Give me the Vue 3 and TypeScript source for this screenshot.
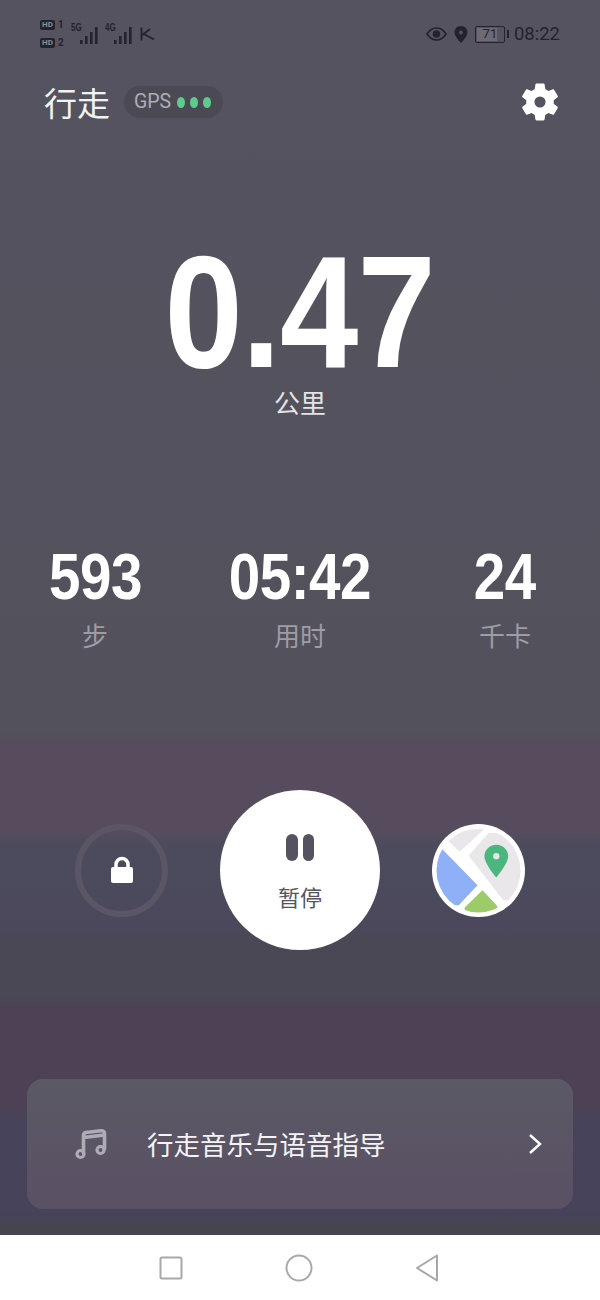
<template>
  <div class="screen">
    <div class="status-bar">
      <div class="status-left">
        <div class="hd-col">
          <div class="hd-row"><span class="hd">HD</span><span class="sim">1</span></div>
          <div class="hd-row"><span class="hd">HD</span><span class="sim">2</span></div>
        </div>
        <div class="signal">
          <span class="net">5G</span>
          <svg width="18" height="18" viewBox="0 0 18 18"><rect v-for="b in bars" :key="b.x" :x="b.x" :y="b.y" width="2.6" :height="18 - b.y" fill="#24232c" /></svg>
        </div>
        <div class="signal">
          <span class="net">4G</span>
          <svg width="18" height="18" viewBox="0 0 18 18"><rect v-for="b in bars" :key="b.x" :x="b.x" :y="b.y" width="2.6" :height="18 - b.y" fill="#24232c" /></svg>
        </div>
        <svg class="k-icon" width="15" height="14" viewBox="0 0 15 14"><path d="M1.500 0.500V13.500M1.500 8.500L10 2M4 7L14 12.500" fill="none" stroke="#24232c" stroke-width="1.800" /></svg>
      </div>
      <div class="status-right">
        <svg width="21" height="14" viewBox="0 0 21 14"><path d="M1 7C3.500 3 6.500 1 10.500 1S17.500 3 20 7C17.500 11 14.500 13 10.500 13S3.500 11 1 7Z" fill="none" stroke="#24232c" stroke-width="1.600" /><circle cx="10.500" cy="7" r="3.800" fill="#24232c" /></svg>
        <svg width="14" height="17" viewBox="0 0 14 17"><path fill-rule="evenodd" d="M7 0C3.100 0 .5 2.900 .5 6.300C.5 10.500 7 17 7 17S13.500 10.500 13.500 6.300C13.500 2.900 10.900 0 7 0ZM7 4.600A1.900 1.900 0 1 1 7 8.400A1.900 1.900 0 0 1 7 4.600Z" fill="#24232c" /></svg>
        <div class="battery">
          <div class="battery-body"><span class="battery-fill"></span><span class="battery-text">71</span></div>
          <span class="battery-tip"></span>
        </div>
        <span class="clock">08:22</span>
      </div>
    </div>

    <div class="title-row">
      <div class="title-left">
        <span class="title">行走</span>
        <div class="gps">
          <span class="gps-text">GPS</span>
          <i></i><i></i><i></i>
        </div>
      </div>
      <svg class="gear" width="46" height="46" viewBox="0 0 24 24"><path fill="#fff" fill-rule="evenodd" d="M19.140 12.940c.04-.3.060-.61.060-.94 0-.32-.02-.64-.07-.94l2.030-1.580a.49.49 0 0 0 .12-.61l-1.920-3.320a.488.488 0 0 0-.59-.22l-2.390.96c-.5-.38-1.030-.7-1.620-.94l-.36-2.540a.484.484 0 0 0-.48-.41h-3.840c-.24 0-.43.17-.47.41l-.36 2.540c-.59.24-1.130.57-1.620.94l-2.390-.96c-.22-.08-.47 0-.59.22L2.740 8.870c-.12.21-.08.47.12.61l2.030 1.580c-.05.3-.09.63-.09.94s.02.64.07.94l-2.030 1.580a.49.49 0 0 0-.12.61l1.920 3.320c.12.22.37.29.59.22l2.390-.96c.5.38 1.030.7 1.620.94l.36 2.540c.05.24.24.41.48.41h3.840c.24 0 .44-.17.47-.41l.36-2.540c.59-.24 1.130-.56 1.620-.94l2.390.96c.22.08.47 0 .59-.22l1.920-3.320c.12-.22.07-.47-.12-.61l-2.010-1.580zM12 9.100a2.900 2.900 0 1 0 0 5.800a2.900 2.900 0 1 0 0-5.800z" /></svg>
    </div>

    <div class="distance">
      <div class="distance-value">0.47</div>
      <div class="distance-unit">公里</div>
    </div>

    <div class="stats">
      <div v-for="s in stats" :key="s.label" class="stat">
        <div class="stat-value">{{ s.value }}</div>
        <div class="stat-label">{{ s.label }}</div>
      </div>
    </div>

    <div class="controls">
      <div class="lock-btn">
        <svg width="24" height="28" viewBox="0 0 24 28"><path d="M6 13V8.500A6 6 0 0 1 18 8.500V13" fill="none" stroke="#fff" stroke-width="3.500" /><rect x="1" y="11" width="22" height="16" rx="2" fill="#fff" /></svg>
      </div>
      <div class="pause-btn">
        <div class="pause-icon"><span></span><span></span></div>
        <div class="pause-label">暂停</div>
      </div>
      <svg class="map-btn" width="93" height="93" viewBox="0 0 94 94">
        <defs><clipPath id="mapClip"><circle cx="47" cy="47" r="42.500" /></clipPath></defs>
        <circle cx="47" cy="47" r="47" fill="#fff" />
        <g clip-path="url(#mapClip)">
          <path d="M10 25L46 62L27 82L0 82V25Z" fill="#8fb0f6" />
          <path d="M15 16L24 6L53 5L28 28Z" fill="#e9e7ea" />
          <path d="M37 32L57 9H94V77H72Z" fill="#e9e7ea" />
          <path d="M33 84.500L51 67L66 83V94H33Z" fill="#9ccb68" />
        </g>
        <path fill-rule="evenodd" d="M65 21C58 21 53 26.500 53 32.500C53 40 65 54 65 54S77 40 77 32.500C77 26.500 72 21 65 21ZM65 29.300A3.200 3.200 0 1 1 65 35.700A3.200 3.200 0 0 1 65 29.300Z" fill="#4cb67f" />
      </svg>
    </div>

    <div class="guide-card">
      <svg class="music" width="32" height="32" viewBox="0 0 32 32"><path d="M8.500 25V7.500C8.500 5.500 9.500 4.800 11 4.500L26 2.800C28 2.600 29.500 3.500 29.500 5V21M8.500 9.500L29.500 7" fill="none" stroke="#aeabb4" stroke-width="3.600" stroke-linecap="round" /><circle cx="5.500" cy="26" r="3.500" fill="none" stroke="#aeabb4" stroke-width="3.200" /><circle cx="25.500" cy="22" r="3.500" fill="none" stroke="#aeabb4" stroke-width="3.200" /></svg>
      <span class="guide-text">行走音乐与语音指导</span>
      <svg class="chevron" width="14" height="22" viewBox="0 0 14 22"><path d="M2 2L12 11L2 20" fill="none" stroke="#fff" stroke-width="2.400" /></svg>
    </div>

    <div class="spacer"></div>

    <div class="nav-bar">
      <svg width="24" height="24" viewBox="0 0 24 24"><rect x="1.500" y="1.500" width="21" height="21" rx="1.500" fill="none" stroke="#a8a8a8" stroke-width="2" /></svg>
      <svg width="28" height="28" viewBox="0 0 28 28"><circle cx="14" cy="14" r="12.500" fill="none" stroke="#a8a8a8" stroke-width="2" /></svg>
      <svg width="24" height="28" viewBox="0 0 24 28"><path d="M22 1.500V26.500L2 14Z" fill="none" stroke="#a8a8a8" stroke-width="2" stroke-linejoin="round" /></svg>
    </div>
  </div>
</template>

<script setup lang="ts">
const bars = [
  { x: 0, y: 14 },
  { x: 5, y: 10 },
  { x: 10, y: 6 },
  { x: 15, y: 1 },
]

const stats = [
  { value: '593', label: '步' },
  { value: '05:42', label: '用时' },
  { value: '24', label: '千卡' },
]
</script>

<style>
html,
body {
  margin: 0;
  background: #fff;
}
</style>

<style scoped>
.screen {
  width: 600px;
  height: 1300px;
  display: flex;
  flex-direction: column;
  overflow: hidden;
  font-family: "Noto Sans CJK SC", Roboto, sans-serif;
  color: #fff;
  background: linear-gradient(to bottom,
    #55535f 0,
    #53515c 733px,
    #564c5d 740px,
    #564c5d 832px,
    #4c4b5c 845px,
    #4b485d 925px,
    #4a4854 940px,
    #4a4854 995px,
    #4d4255 1008px,
    #4d4255 1105px,
    #46435a 1125px,
    #46435a 1212px,
    #47444f 1228px);
}

.status-bar {
  height: 68px;
  padding: 0 40px;
  display: flex;
  align-items: center;
  justify-content: space-between;
  color: #24232c;
}

.status-left,
.status-right {
  display: flex;
  align-items: center;
}

.status-left {
  gap: 7px;
}

.status-right {
  gap: 7px;
}

.hd-col {
  display: flex;
  flex-direction: column;
  gap: 8px;
}

.hd-row {
  display: flex;
  align-items: center;
  gap: 3px;
}

.hd {
  width: 15px;
  height: 10px;
  border-radius: 2px;
  background: #24232c;
  color: #8e8c94;
  font: 700 8px/10px Roboto, sans-serif;
  text-align: center;
}

.sim {
  width: 6px;
  font: 700 10px/10px Roboto, sans-serif;
}

.signal {
  position: relative;
  width: 27px;
  height: 20px;
  display: flex;
  justify-content: flex-end;
  align-items: flex-end;
}

.net {
  position: absolute;
  left: 0;
  top: -2px;
  font: 700 10px/11px "Liberation Sans", sans-serif;
  transform: scaleX(.8);
  transform-origin: left;
}

.k-icon {
  margin-left: 1px;
}

.battery {
  display: flex;
  align-items: center;
  gap: 2px;
  margin-right: -2px;
}

.battery-body {
  position: relative;
  box-sizing: border-box;
  width: 30px;
  height: 17px;
  border: 1.500px solid #24232c;
  border-radius: 2px;
}

.battery-fill {
  position: absolute;
  left: 1px;
  top: 1px;
  bottom: 1px;
  width: 70%;
  background: #6c6a73;
}

.battery-text {
  position: relative;
  display: block;
  font: 400 13px/14px Roboto, sans-serif;
  text-align: center;
}

.battery-tip {
  width: 2px;
  height: 8px;
  background: #24232c;
}

.clock {
  font: 400 18.500px/20px Roboto, sans-serif;
}

.title-row {
  height: 68px;
  padding: 0 37px 0 44px;
  display: flex;
  align-items: center;
  justify-content: space-between;
}

.title-left {
  display: flex;
  align-items: center;
  gap: 14px;
}

.title {
  font-size: 33px;
  line-height: 40px;
  color: #f2f2f3;
}

.gps {
  height: 32px;
  padding: 0 12px 0 10px;
  border-radius: 16px;
  display: flex;
  align-items: center;
  gap: 5px;
  background: #4b4a54;
  color: #aeadb4;
  font: 400 19.500px/32px Roboto, sans-serif;
}

.gps-text {
  margin-right: 1px;
}

.gps i {
  width: 8px;
  height: 11px;
  border-radius: 50%;
  background: #5ecb8d;
}

.gear {
  display: block;
}

.distance {
  margin-top: 101px;
  display: flex;
  flex-direction: column;
  align-items: center;
}

.distance-value {
  font: 700 160px/150px "Liberation Sans", sans-serif;
  letter-spacing: -1px;
  transform: scaleX(.88);
}

.distance-unit {
  margin-top: -3px;
  font-size: 26px;
  line-height: 36px;
  color: #e4e3e6;
}

.stats {
  margin-top: 127px;
  display: grid;
  grid-template-columns: 190px 220px 190px;
}

.stat {
  display: flex;
  flex-direction: column;
  align-items: center;
}

.stat-value {
  font: 700 65px/60px "Liberation Sans", sans-serif;
  letter-spacing: -.5px;
  transform: scaleX(.87);
}

.stat-label {
  margin-top: 10px;
  font-size: 26px;
  line-height: 36px;
  color: #9e9ca5;
}

.controls {
  margin-top: 137px;
  padding: 0 75px;
  display: flex;
  align-items: center;
  justify-content: space-between;
}

.lock-btn {
  box-sizing: border-box;
  width: 93px;
  height: 93px;
  border: 6px solid #5a5665;
  border-radius: 50%;
  display: flex;
  align-items: center;
  justify-content: center;
}

.pause-btn {
  box-sizing: border-box;
  width: 160px;
  height: 160px;
  padding-top: 44px;
  border-radius: 50%;
  background: #fff;
  display: flex;
  flex-direction: column;
  align-items: center;
  color: #55535f;
}

.pause-icon {
  display: flex;
  gap: 5px;
}

.pause-icon span {
  width: 11.500px;
  height: 27px;
  border-radius: 6px;
  background: #55535f;
}

.pause-label {
  margin-top: 19px;
  font-size: 22px;
  line-height: 32px;
}

.map-btn {
  display: block;
}

.guide-card {
  margin: 129px 27px 0;
  height: 130px;
  padding: 0 31px 0 48px;
  border-radius: 16px;
  background: linear-gradient(to bottom, #5b5965, #5a5064);
  display: flex;
  align-items: center;
}

.music {
  flex-shrink: 0;
}

.guide-text {
  margin-left: 40px;
  flex: 1;
  font-size: 26.500px;
  line-height: 36px;
  color: #f4f3f5;
}

.spacer {
  flex: 1;
}

.nav-bar {
  height: 65px;
  padding: 0 161px 0 159px;
  display: flex;
  align-items: center;
  justify-content: space-between;
  background: #fff;
}
</style>
